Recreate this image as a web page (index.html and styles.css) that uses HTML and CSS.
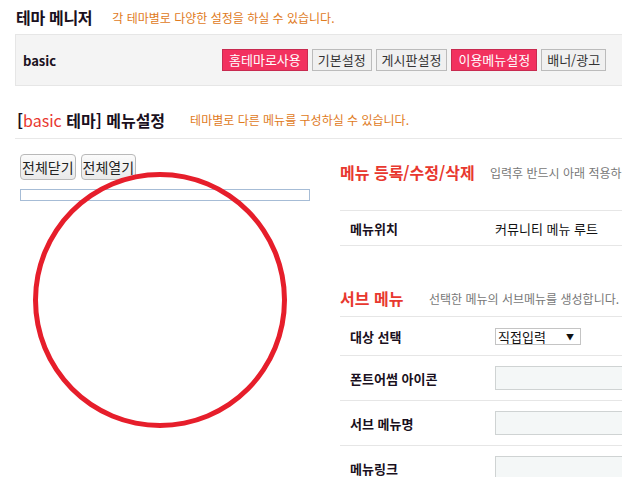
FILE: index.html
```html
<!DOCTYPE html>
<html lang="ko">
<head>
    <meta charset="utf-8" />
    <title>테마 메니저</title>
    <link rel="stylesheet" href="styles.css">
</head>
<body>

<div class="tm-wrap">

    <div class="tm-head">
        <h2 class="tm-head-title">테마 메니저</h2>
        <span class="tm-note">각 테마별로 다양한 설정을 하실 수 있습니다.</span>
    </div>

    <div class="tm-bar">
        <strong class="tm-bar-name">basic</strong>
        <div class="tm-bar-btns">
            <a href="#0" class="tm-btn tm-btn-on">홈테마로사용</a>
            <a href="#0" class="tm-btn">기본설정</a>
            <a href="#0" class="tm-btn">게시판설정</a>
            <a href="#0" class="tm-btn tm-btn-on">이용메뉴설정</a>
            <a href="#0" class="tm-btn">배너/광고</a>
        </div>
    </div>

    <div class="tm-sect">
        <h3 class="tm-sect-title">[<span class="tm-red">basic</span> 테마] 메뉴설정</h3>
        <span class="tm-note">테마별로 다른 메뉴를 구성하실 수 있습니다.</span>
    </div>

    <div class="tm-cols">
        <div class="tm-left">
            <div class="tm-tree-btns">
                <button type="button" class="tm-tree-btn">전체닫기</button>
                <button type="button" class="tm-tree-btn">전체열기</button>
            </div>
            <div class="tm-tree"></div>
        </div>

        <div class="tm-right">
            <div class="tm-form-head">
                <h4 class="tm-form-title">메뉴 등록/수정/삭제</h4>
                <span class="tm-form-note">입력후 반드시 아래 적용하기 버튼을 눌러주세요.</span>
            </div>
            <div class="tm-table">
                <div class="tm-row tm-row-sm">
                    <div class="tm-label">메뉴위치</div>
                    <div class="tm-value">커뮤니티 메뉴 루트</div>
                </div>
            </div>

            <div class="tm-form-head tm-form-head-sub">
                <h4 class="tm-form-title">서브 메뉴</h4>
                <span class="tm-form-note">선택한 메뉴의 서브메뉴를 생성합니다.</span>
            </div>
            <div class="tm-table">
                <div class="tm-row tm-row-md">
                    <div class="tm-label">대상 선택</div>
                    <div class="tm-value">
                        <span class="tm-select">직접입력 <i class="tm-select-arrow">▼</i></span>
                    </div>
                </div>
                <div class="tm-row">
                    <div class="tm-label">폰트어썸 아이콘</div>
                    <div class="tm-value"><input type="text" class="tm-input" /></div>
                </div>
                <div class="tm-row">
                    <div class="tm-label">서브 메뉴명</div>
                    <div class="tm-value"><input type="text" class="tm-input" /></div>
                </div>
                <div class="tm-row">
                    <div class="tm-label">메뉴링크</div>
                    <div class="tm-value"><input type="text" class="tm-input" /></div>
                </div>
            </div>
        </div>
    </div>

</div>

<!-- annotation mark over the empty menu tree -->
<div class="tm-mark"></div>

</body>
</html>
```

FILE: styles.css
```css
html, body {
    margin:0;
    padding:0;
    overflow:hidden;
    background:#fff;
}

body {
    font-family:"Noto Sans CJK KR","Liberation Sans",sans-serif;
    font-size:13px;
    color:#111;
}

.tm-wrap {
    width:720px;
    padding:0 0 0 15px;
}

/* page head */
.tm-head {
    display:flex;
    align-items:center;
    height:34px;
    padding-left:1px;
}

.tm-head-title {
    margin:0;
    font-size:16px;
    font-weight:bold;
    color:#1a1020;
    letter-spacing:-0.3px;
}

.tm-note {
    font-size:12px;
    color:#e07a1c;
    margin-left:20px;
}

/* theme bar */
.tm-bar {
    display:flex;
    align-items:center;
    height:50px;
    padding:0 0 0 7px;
    background:#f4f4f4;
    border:1px solid #e6e6e6;
    border-right:0;
}

.tm-bar-name {
    width:199px;
    flex:none;
    font-size:13px;
    color:#1a1020;
}

.tm-bar-btns {
    display:flex;
    gap:4px;
}

.tm-btn {
    display:block;
    height:20px;
    line-height:20px;
    padding:0 5px;
    font-size:13px;
    color:#333;
    background:#f0f0f0;
    border:1px solid #bbb;
    text-decoration:none;
    white-space:nowrap;
}

.tm-btn-on {
    padding:0 6px;
    color:#fff;
    background:#f2315f;
    border-color:#c82a50;
}

/* section head */
.tm-sect {
    display:flex;
    align-items:center;
    height:37px;
    padding:14px 0 0 2px;
    margin-top:1px;
    border-bottom:1px solid #e8e8e8;
}

.tm-sect-title {
    margin:0;
    font-size:16px;
    font-weight:bold;
    color:#1a1020;
}

.tm-sect .tm-note {
    margin-left:25px;
}

.tm-red {
    color:#e8382f;
    font-weight:normal;
}

/* columns */
.tm-cols {
    display:flex;
    gap:30px;
    padding:15px 0 0 5px;
}

.tm-left {
    width:290px;
    flex:none;
}

.tm-tree-btns {
    display:flex;
    gap:5px;
}

.tm-tree-btn {
    height:26px;
    padding:0 1px;
    font-family:inherit;
    font-size:14px;
    color:#222;
    background:linear-gradient(#fbfbfb,#e9e9e9);
    border:1px solid #b9b9b9;
    border-radius:4px;
}

.tm-tree {
    height:10px;
    margin-top:9px;
    border:1px solid #a6bcd6;
}

.tm-right {
    flex:1;
}

.tm-form-head {
    display:flex;
    align-items:center;
    height:36px;
    margin-bottom:20px;
}

.tm-form-head-sub {
    height:36px;
    margin:34px 0 0;
}

.tm-form-title {
    margin:0;
    font-size:16px;
    font-weight:bold;
    color:#e8382f;
    width:150px;
    flex:none;
}

.tm-form-head-sub .tm-form-title {
    width:89px;
}

.tm-form-note {
    font-size:12px;
    color:#777;
    white-space:nowrap;
}

.tm-table {
    border-top:1px solid #e6e6e6;
}

.tm-row {
    display:flex;
    align-items:center;
    height:44px;
    border-bottom:1px solid #e6e6e6;
}

.tm-row-sm {
    height:34px;
}

.tm-row-md {
    height:38px;
}

.tm-label {
    width:145px;
    padding-left:10px;
    font-weight:bold;
    color:#1a1020;
}

.tm-value {
    flex:1;
}

.tm-select {
    display:inline-flex;
    align-items:center;
    justify-content:space-between;
    box-sizing:border-box;
    width:86px;
    height:17px;
    padding:0 6px 0 2px;
    font-size:13px;
    border:1px solid #c4c4c4;
    background:#fff;
}

.tm-select-arrow {
    font-style:normal;
    font-size:8px;
}

.tm-input {
    display:block;
    box-sizing:border-box;
    width:220px;
    height:24px;
    margin:0;
    background:#f4f7f7;
    border:1px solid #cfd3d3;
}

/* red circle over the tree */
.tm-mark {
    position:absolute;
    left:33px;
    top:172px;
    box-sizing:border-box;
    width:254px;
    height:256px;
    border:5px solid #e61e2b;
    border-radius:50%;
}
```
